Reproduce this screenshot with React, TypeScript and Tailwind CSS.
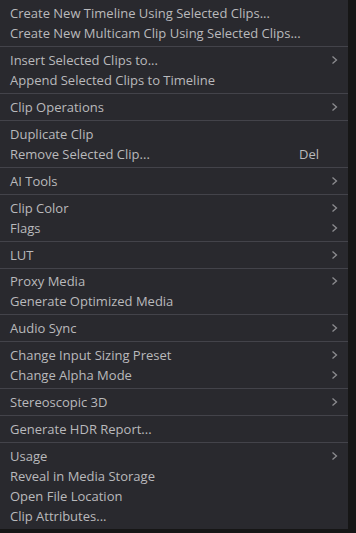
import React from 'react';

type Item = { label: string; sub?: boolean; shortcut?: string };

const groups: Item[][] = [
  [
    { label: 'Create New Timeline Using Selected Clips...' },
    { label: 'Create New Multicam Clip Using Selected Clips...' },
  ],
  [
    { label: 'Insert Selected Clips to...', sub: true },
    { label: 'Append Selected Clips to Timeline' },
  ],
  [{ label: 'Clip Operations', sub: true }],
  [
    { label: 'Duplicate Clip' },
    { label: 'Remove Selected Clip...', shortcut: 'Del' },
  ],
  [{ label: 'AI Tools', sub: true }],
  [
    { label: 'Clip Color', sub: true },
    { label: 'Flags', sub: true },
  ],
  [{ label: 'LUT', sub: true }],
  [
    { label: 'Proxy Media', sub: true },
    { label: 'Generate Optimized Media' },
  ],
  [{ label: 'Audio Sync', sub: true }],
  [
    { label: 'Change Input Sizing Preset', sub: true },
    { label: 'Change Alpha Mode', sub: true },
  ],
  [{ label: 'Stereoscopic 3D', sub: true }],
  [{ label: 'Generate HDR Report...' }],
  [
    { label: 'Usage', sub: true },
    { label: 'Reveal in Media Storage' },
    { label: 'Open File Location' },
    { label: 'Clip Attributes...' },
  ],
];

const Chevron = () => (
  <svg width="7" height="10" viewBox="0 0 7 10" className="shrink-0">
    <path d="M1.5 1.5 L5.5 5 L1.5 8.5" fill="none" stroke="#8c8c90" strokeWidth="1.3" />
  </svg>
);

const Row = ({ item }: { item: Item }) => (
  <div className="flex h-[20px] items-center pl-[10px] pr-[10px]">
    <span className="flex-1 whitespace-nowrap">{item.label}</span>
    {item.shortcut && <span className="mr-[19px]">{item.shortcut}</span>}
    {item.sub && <Chevron />}
  </div>
);

export default function App() {
  return (
    <div className="flex h-[533px] w-[356px] bg-[#161616]">
      <div
        className="flex h-[529px] w-[348px] flex-col bg-[#29292e] py-[3px] text-[13px] leading-[20px] text-[#b9b9bc]"
        style={{ fontFamily: '"Open Sans", "Noto Sans", sans-serif' }}
      >
        {groups.map((g, i) => (
          <React.Fragment key={i}>
            {i > 0 && <div className="my-[3px] h-px bg-[#43434a]" />}
            {g.map((item) => (
              <Row key={item.label} item={item} />
            ))}
          </React.Fragment>
        ))}
      </div>
    </div>
  );
}
